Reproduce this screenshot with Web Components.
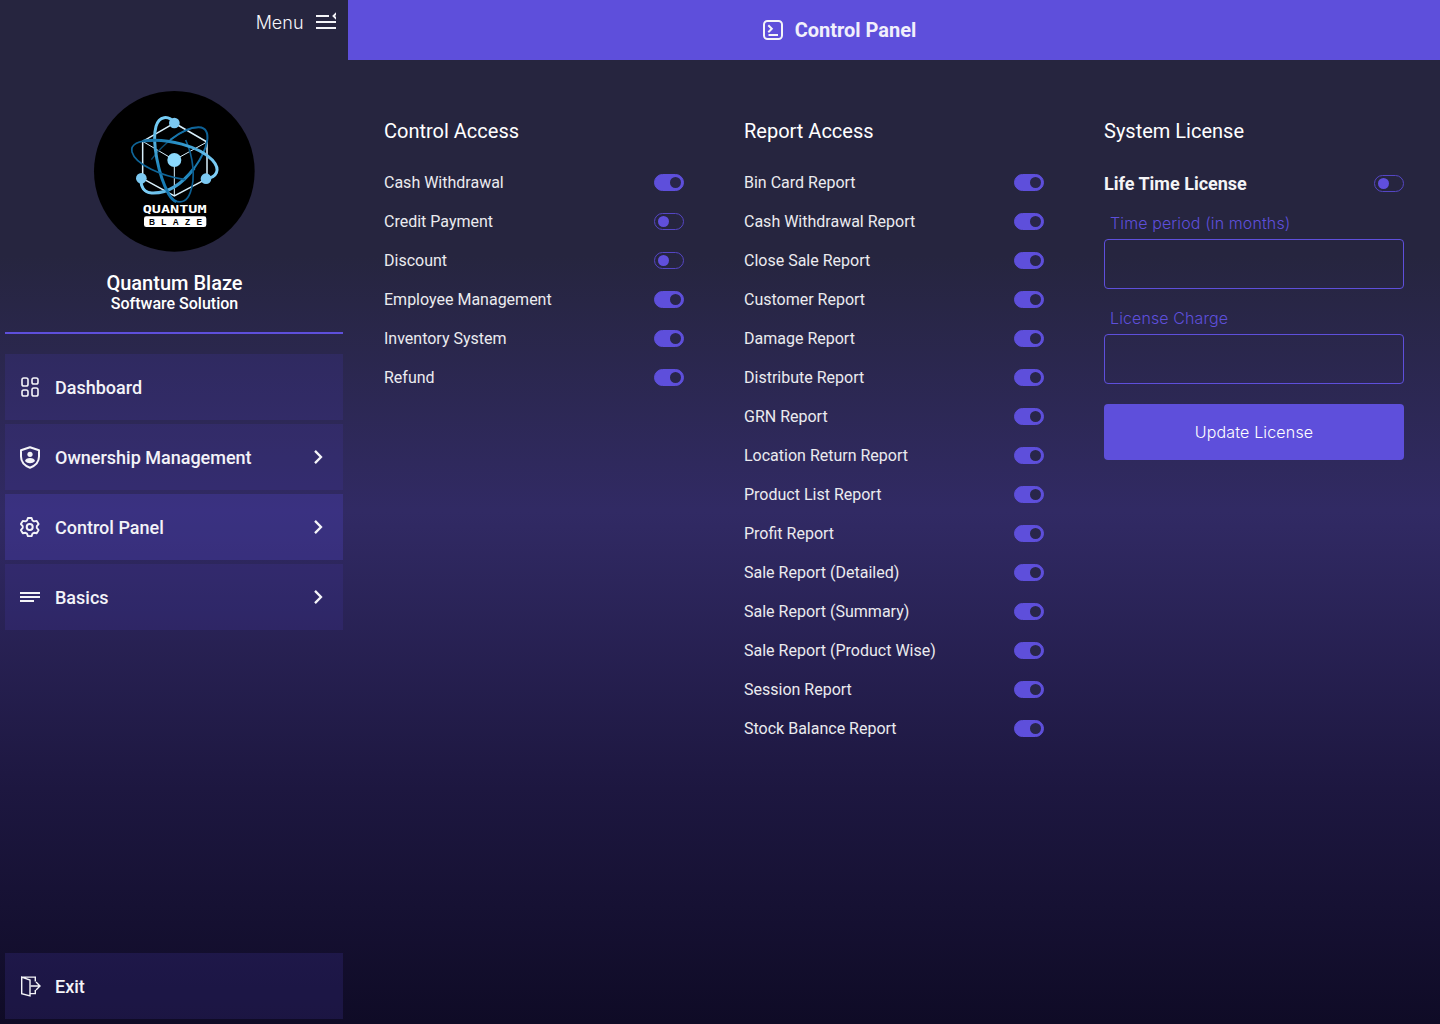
<!DOCTYPE html>
<html lang="en">
<head>
<meta charset="utf-8">
<title>Control Panel</title>
<style>
html,body{margin:0;height:100%}
body{font-family:Roboto,sans-serif;color:#fff;overflow:hidden}
</style>
</head>
<body>
<qb-app></qb-app>
<script>
const define=(name,html)=>customElements.define(name,class extends HTMLElement{
  connectedCallback(){
    if(this.shadowRoot)return;
    const t=document.createElement('template');
    t.innerHTML=typeof html==='function'?html(this):html;
    this.attachShadow({mode:'open'}).append(t.content.cloneNode(true));
  }
});

const icons={
menu:`<clipPath id="m"><path d="M0 0h20v20H0z"/></clipPath><g clip-path="url(#m)"><path d="M0 4h13M0 10h20M0 16h20" stroke-width="2"/><path d="M20.800 .9L17.600 4l3.200 3.100" stroke-width="2"/></g>`,
dash:`<g stroke-width="1.600" transform="translate(1 0)"><rect x="1" y="1" width="6" height="8" rx="1.800"/><rect x="11" y="1" width="6" height="6" rx="1.800"/><rect x="1" y="13" width="6" height="6" rx="1.800"/><rect x="11" y="11" width="6" height="8" rx="1.800"/></g>`,
shield:`<path d="M10 .3L19 3.300v6.200c0 5-3.700 9.200-9 11.200-5.300-2-9-6.200-9-11.200V3.300z" stroke-width="2" stroke-linejoin="round"/><circle cx="10" cy="7.300" r="2.600" fill="currentColor" stroke="none"/><path d="M5 14c.4-2 2.300-3.100 5-3.100s4.600 1.100 5 3.100c-1.300 1.500-3 2.200-5 2.200s-3.700-.7-5-2.200z" fill="currentColor" stroke="none"/>`,
gear:`<path d="M7.900 1h3.700l.9 2.500 1.500.9 2.700-.5 1.900 3.200-1.800 2.100v1.700l1.800 2.100-1.900 3.200-2.700-.5-1.500.9-.9 2.500H7.900L7 16.600l-1.500-.9-2.700.5L.9 13l1.800-2.100V9.200L.9 7.100l1.900-3.200 2.700.5L7 3.500z" stroke-width="1.900" stroke-linejoin="round"/><circle cx="9.700" cy="10" r="3" stroke-width="2"/>`,
basics:`<path d="M0 6h20M0 10h20M0 14h14" stroke-width="2"/>`,
chev:`<path d="M7 3.900l6 6.100-6 6.100" stroke-width="2.300"/>`,
exit:`<path d="M1.700 1.100l8.300 2.900v15.900l-8.300-2.200zM1.700 1.100h13.600v4.500M10 17.600h5.300v-3.700" stroke-width="1.400"/><path d="M10.500 10h9.500M16 6l4 4-4 4" stroke-width="1.400"/>`,
term:`<rect x="1" y="1" width="18" height="18" rx="3.500" stroke-width="2"/><path d="M5.300 5.300l3.500 3.500-3.500 3.500" stroke-width="2"/><path d="M5.500 15h9.500" stroke-width="2"/>`
};
define('qb-icon',el=>`<style>:host{display:block;width:20px;height:20px;flex:none;color:#f4f4f8}svg{display:block;overflow:visible}</style><svg width="20" height="20" viewBox="0 0 20 20" fill="none" stroke="currentColor">${icons[el.getAttribute('name')]}</svg>`);

define('qb-logo',`<style>:host{display:block;width:170px;height:170px}svg{display:block}</style>
<svg width="170" height="170" viewBox="0 0 510 510" fill="none">
<defs>
<linearGradient id="a" gradientUnits="userSpaceOnUse" x1="200" y1="110" x2="310" y2="340"><stop stop-color="#77cdf5"/><stop offset=".5" stop-color="#1f86bd"/><stop offset="1" stop-color="#0d6ba5"/></linearGradient>
<linearGradient id="b" gradientUnits="userSpaceOnUse" x1="130" y1="190" x2="380" y2="260"><stop stop-color="#0f6598"/><stop offset=".5" stop-color="#2c93c9"/><stop offset="1" stop-color="#80d0f8"/></linearGradient>
<linearGradient id="c" gradientUnits="userSpaceOnUse" x1="160" y1="320" x2="350" y2="140"><stop stop-color="#80d0f8"/><stop offset=".5" stop-color="#1f86bd"/><stop offset="1" stop-color="#0d6095"/></linearGradient>
</defs>
<circle cx="253" cy="259" r="241" fill="#000"/>
<g stroke="#d8f0fc"><path d="M253 114l98 57v110l-98 52-95-52V169z" stroke-width="4.500"/><path d="M158 169l95 56 98-54M253 225v108" stroke-width="3"/></g>
<path d="M184 224C219 176 282 126 327 127" stroke="#0b4a70" stroke-width="4"/>
<path d="M240 165C270 142 302 126 327 127C369 129 355 190 313 249C271 304 226 326 185 324C163 322 151 307 154 281" stroke="url(#c)" stroke-width="6"/>
<path d="M313 249C271 304 226 326 185 324C163 322 151 307 154 281" stroke="url(#c)" stroke-width="9"/>
<path d="M287 165c23 50 30 115 14 157-9 25-24 34-47 25" stroke="#0c5f92" stroke-width="5"/>
<path d="M254 114c-19-25-47-21-56 10-13 45 7 147 38 203 7 12 14 20 23 23" stroke="url(#a)" stroke-width="9"/>
<path d="M286 284c-70-10-150-45-160-83-6-23 20-35 62-35" stroke="#0f6598" stroke-width="5"/>
<path d="M160 168c70-11 169 17 207 57 27 30 12 53-19 56" stroke="url(#b)" stroke-width="9"/>
<circle cx="253" cy="225" r="21" fill="#8bd8fc"/>
<g fill="#7cc9f2"><circle cx="253" cy="114" r="16"/><circle cx="154" cy="280" r="16"/><circle cx="348" cy="281" r="16"/></g>
<text x="158" y="385" textLength="192" lengthAdjust="spacingAndGlyphs" font-family="DejaVu Sans Mono" font-weight="700" font-size="34" fill="#fff">QUANTUM</text>
<rect x="162" y="394" width="187" height="32" rx="7" fill="#fff"/>
<text x="177" y="419" textLength="159" font-family="Liberation Sans" font-weight="700" font-size="25" fill="#000">BLAZE</text>
</svg>`);

define('qb-nav-item',el=>`<style>
:host{display:flex;align-items:center;height:66px;box-sizing:border-box;padding:0 15px;gap:15px;background:rgba(65,53,160,.24);font:500 18px/24px Roboto,sans-serif;color:#f3f3f8}
:host([active]){background:rgba(76,65,180,.36)}
span{flex:1;padding-top:1px}
</style><qb-icon name="${el.getAttribute('icon')}"></qb-icon><span><slot></slot></span>${el.hasAttribute('sub')?'<qb-icon name="chev"></qb-icon>':''}`);

define('qb-sidebar',`<style>
:host{display:flex;flex-direction:column;width:348px;height:100%;box-sizing:border-box;padding:0 5px 5px;flex:none}
.menu{display:flex;justify-content:flex-end;align-items:center;height:44px;gap:13px;padding-right:7px;font:300 18px/22px Inter,sans-serif;color:#f6f6fa}
.menu span{padding-top:2px;margin-right:-.5px}
.brand{display:flex;flex-direction:column;align-items:center;padding-top:41px;height:247px;border-bottom:2px solid #5e4fdb;margin-bottom:20px}
qb-logo{margin-left:2px}
h1{margin:18px 0 0 1px;font:500 20px/20px Roboto,sans-serif}
p{margin:1px 0 0 1px;font:500 16px/20px Roboto,sans-serif}
nav{display:flex;flex-direction:column;gap:4px;flex:1}
.exit{margin-top:auto}
</style>
<div class="menu"><span>Menu</span><qb-icon name="menu"></qb-icon></div>
<div class="brand"><qb-logo></qb-logo><h1>Quantum Blaze</h1><p>Software Solution</p></div>
<nav><qb-nav-item icon="dash">Dashboard</qb-nav-item><qb-nav-item icon="shield" sub>Ownership Management</qb-nav-item><qb-nav-item icon="gear" sub active>Control Panel</qb-nav-item><qb-nav-item icon="basics" sub>Basics</qb-nav-item><qb-nav-item class="exit" icon="exit">Exit</qb-nav-item></nav>`);

define('qb-switch',`<style>
:host{display:flex;align-items:center;width:30px;height:17px;box-sizing:border-box;border:1px solid #5546c4;border-radius:9px;padding:0 2px 0 3px;flex:none}
i{width:11px;height:11px;border-radius:50%;background:#604fdc}
:host([on]){background:#5e4fdb;border-color:#5e4fdb;justify-content:flex-end}
:host([on]) i{background:#29264a}
</style><i></i>`);

define('qb-toggle-row',el=>`<style>
:host{display:flex;align-items:center;justify-content:space-between;height:19px;font:400 16px/19px Roboto,sans-serif;color:#ebebef}
:host([strong]){font-weight:700;font-size:18px;line-height:21px;height:21px;color:#f4f4f6}
</style><slot></slot><qb-switch ${el.hasAttribute('on')?'on':''}></qb-switch>`);

define('qb-column',`<style>
:host{display:flex;flex-direction:column;width:300px}
h2{margin:0 0 30px;font:400 20px/23px Roboto,sans-serif;color:#fff}
.list{display:flex;flex-direction:column;gap:20px}
</style><h2><slot name="title"></slot></h2><div class="list"><slot></slot></div>`);

define('qb-field',`<style>
:host{display:flex;flex-direction:column;gap:6px}
label{padding-left:6px;font:300 16px/19px Inter,sans-serif;letter-spacing:.11px;color:#5e4fdb}
input{height:50px;box-sizing:border-box;width:100%;border:1px solid #5e4fdb;border-radius:4px;background:none;color:#fff;padding:0 12px;font:300 16px Inter,sans-serif}
</style><label><slot></slot></label><input type="text">`);

define('qb-button',`<style>
:host{display:block}
button{width:100%;height:56px;border:0;border-radius:4px;background:#5e4fdb;color:#fff;font:300 16px/20px Inter,sans-serif;letter-spacing:.17px;padding:0 6px 1px}
</style><button><slot></slot></button>`);

define('qb-header',`<style>
:host{display:flex;align-items:center;justify-content:center;gap:12px;height:60px;box-sizing:border-box;padding-right:109px;background:#5e4fdb;font:700 20px/24px Roboto,sans-serif;color:#f1effb}
</style><qb-icon name="term"></qb-icon><span><slot></slot></span>`);

const rows=(names,off=[])=>names.map(n=>`<qb-toggle-row ${off.includes(n)?'':'on'}>${n}</qb-toggle-row>`).join('');
define('qb-app',`<style>
:host{display:flex;width:1440px;height:1024px;background:linear-gradient(180deg,#26253f 0%,#26253f 25%,#312a64 50%,#1d1740 77%,#0f0b26 100%)}
main{flex:1;display:flex;flex-direction:column}
.cols{display:flex;gap:60px;padding:60px 36px}
.form{display:flex;flex-direction:column;gap:20px}
</style>
<qb-sidebar></qb-sidebar>
<main><qb-header>Control Panel</qb-header>
<div class="cols">
<qb-column><span slot="title">Control Access</span>${rows(['Cash Withdrawal','Credit Payment','Discount','Employee Management','Inventory System','Refund'],['Credit Payment','Discount'])}</qb-column>
<qb-column><span slot="title">Report Access</span>${rows(['Bin Card Report','Cash Withdrawal Report','Close Sale Report','Customer Report','Damage Report','Distribute Report','GRN Report','Location Return Report','Product List Report','Profit Report','Sale Report (Detailed)','Sale Report (Summary)','Sale Report (Product Wise)','Session Report','Stock Balance Report'])}</qb-column>
<qb-column><span slot="title">System License</span><div class="form"><qb-toggle-row strong>Life Time License</qb-toggle-row><qb-field>Time period (in months)</qb-field><qb-field>License Charge</qb-field><qb-button>Update License</qb-button></div></qb-column>
</div></main>`);
</script>
</body>
</html>
